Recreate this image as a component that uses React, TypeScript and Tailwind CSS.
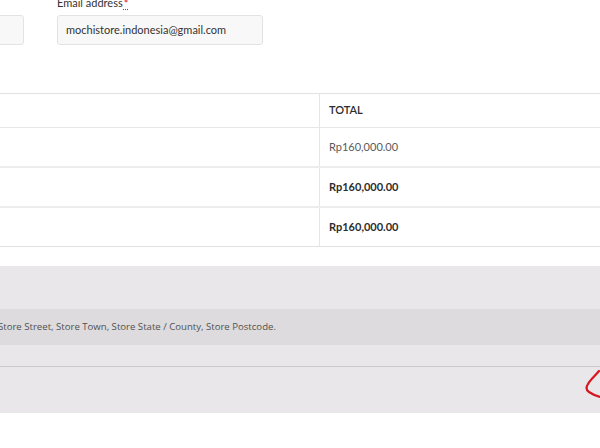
const rows = [
  { amount: "Rp160,000.00", bold: false },
  { amount: "Rp160,000.00", bold: true },
  { amount: "Rp160,000.00", bold: true },
];

const App = () => {
  return (
    <div className="relative h-[448px] w-[600px] overflow-hidden bg-white font-['Lato','Liberation_Sans',sans-serif] text-[#333]">
      {/* billing fields */}
      <div className="-mt-[4px] -ml-[200px] flex gap-[33px]">
        <div className="w-[224px]">
          <div className="h-[19px]" />
          <div className="h-[30px] rounded-[3px] border border-[#e3e3e3] bg-[#f8f8f8]" />
        </div>
        <div className="w-[206px]">
          <label className="block h-[19px] text-[11px] leading-[14px] text-[#333]">
            Email address
            <span className="relative top-[1px] ml-[1px] text-[#e2231a] underline decoration-dotted">*</span>
          </label>
          <div className="flex h-[30px] items-center rounded-[3px] border border-[#e3e3e3] bg-[#f8f8f8] px-[8px] text-[11px] text-[#333]">
            mochistore.indonesia@gmail.com
          </div>
        </div>
      </div>

      {/* order table */}
      <div className="mt-[48px] -ml-[10px] w-[620px] border-y border-[#e2e2e2] text-[11px]">
        <div className="flex h-[33px]">
          <div className="w-[330px] border-r border-[#e6e6e6]" />
          <div className="flex items-center pl-[9px] font-semibold text-[#2d2d2d]">TOTAL</div>
        </div>
        {rows.map((r, i) => (
          <div
            key={i}
            className={`flex ${i === 0 ? "h-[39px] border-t border-[#e6e6e6]" : "h-[40px] border-t-2 border-[#ececec]"}`}
          >
            <div className="w-[330px] border-r border-[#e6e6e6]" />
            <div
              className={`flex items-center pl-[9px] ${r.bold ? "font-bold text-[#2d2d2d]" : "text-[#5a5a5a]"}`}
            >
              {r.amount}
            </div>
          </div>
        ))}
      </div>

      {/* payment box */}
      <div className="relative mt-[19px] h-[147px] bg-[#e9e7e9]">
        <div className="h-[43px]" />
        <div className="flex h-[36px] items-center bg-[#dddbdd] font-['Open_Sans','Liberation_Sans',sans-serif] text-[9.6px] text-[#515151]">
          <span className="-ml-[2px]">Store Street, Store Town, Store State / County, Store Postcode.</span>
        </div>
        <div className="h-[21px]" />
        <div className="border-t border-[#c9c9c9]" />
        <svg
          className="absolute top-[102px] left-[580px]"
          width="20"
          height="34"
          viewBox="0 0 20 34"
          fill="none"
        >
          <path
            d="M19 3 C15 8 10 12 8 16 C6 19 6 22 9 24 C12 26 16 28 20 29"
            stroke="#d7161e"
            strokeWidth="2.2"
            strokeLinecap="round"
            strokeLinejoin="round"
          />
        </svg>
      </div>
    </div>
  );
};

export default App;
